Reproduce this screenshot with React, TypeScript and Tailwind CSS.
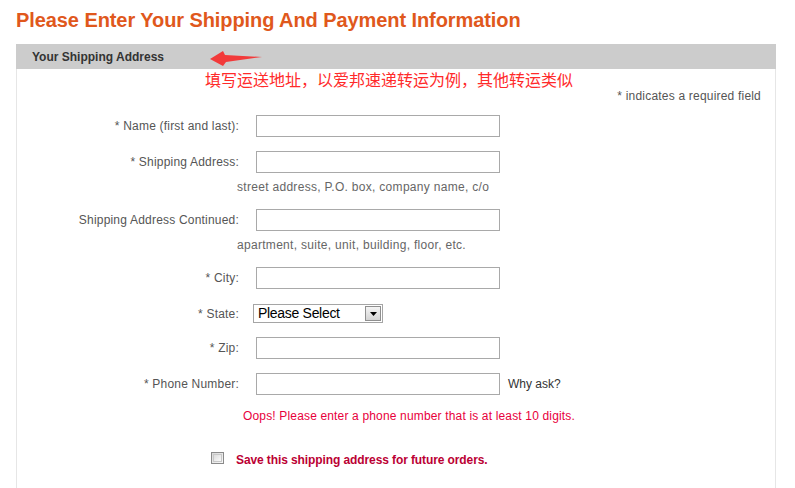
import React from "react";

const Label = ({ children }: { children: React.ReactNode }) => (
  <div className="w-[222px] shrink-0 text-right text-[12px] leading-[14px] tracking-[0.2px] text-[#555555]">{children}</div>
);

const Input = () => (
  <div className="h-[22px] w-[244px] shrink-0 border border-[#a9a9a9] bg-white" />
);

export default function App() {
  return (
    <div
      className="relative h-[488px] w-[795px] overflow-hidden bg-white"
      style={{ fontFamily: '"Liberation Sans", Arial, sans-serif' }}
    >
      <div className="pl-[16px] pt-[8px] text-[20px] font-bold leading-[24px] tracking-[-0.08px] text-[#e0581c]">
        Please Enter Your Shipping And Payment Information
      </div>

      <div className="ml-[16px] mt-[12px] w-[760px]">
        <div className="relative flex h-[25px] items-center bg-[#cccccc] pl-[16px]">
          <span className="text-[12px] font-bold text-[#333333]">Your Shipping Address</span>
          <svg
            className="absolute left-[189px] top-[4px]"
            width="60"
            height="20"
            viewBox="0 0 60 20"
          >
            <polygon points="5,11 18,3 20,7 57,9 21,14 18,18" fill="#f23a3a" />
          </svg>
        </div>

        <div className="h-[419px] border-x border-[#e6e6e6]">
          <div
            className="h-[20px] pl-[188px] text-[16px] leading-[20px] text-[#ff2a2a]"
            style={{ fontFamily: '"Noto Sans CJK SC", "Liberation Sans", sans-serif' }}
          >
            填写运送地址，以爱邦速递转运为例，其他转运类似
          </div>
          <div className="pr-[14px] text-right text-[12px] leading-[14px] tracking-[0.2px] text-[#555555]">
            * indicates a required field
          </div>

          <div className="mt-[12px] flex flex-col">
            <div className="flex items-center">
              <Label>* Name (first and last):</Label>
              <div className="ml-[17px]"><Input /></div>
            </div>

            <div className="mt-[14px] flex items-center">
              <Label>* Shipping Address:</Label>
              <div className="ml-[17px]"><Input /></div>
            </div>
            <div className="mt-[7px] pl-[220px] text-[12px] leading-[14px] tracking-[0.3px] text-[#666666]">
              street address, P.O. box, company name, c/o
            </div>

            <div className="mt-[15px] flex items-center">
              <Label>Shipping Address Continued:</Label>
              <div className="ml-[17px]"><Input /></div>
            </div>
            <div className="mt-[7px] pl-[220px] text-[12px] leading-[14px] tracking-[0.3px] text-[#666666]">
              apartment, suite, unit, building, floor, etc.
            </div>

            <div className="mt-[15px] flex items-center">
              <Label>* City:</Label>
              <div className="ml-[17px]"><Input /></div>
            </div>

            <div className="mt-[15px] flex items-center">
              <Label>* State:</Label>
              <div className="ml-[14px] flex h-[19px] w-[130px] items-center border border-[#a5a5a5] bg-white pl-[4px] pr-[1px]">
                <span className="flex-1 text-[14px] leading-[17px] tracking-[-0.3px] text-black">Please Select</span>
                <div className="flex h-[15px] w-[16px] items-center justify-center border border-[#8f8f8f] bg-gradient-to-b from-[#f4f4f4] to-[#d4d4d4]">
                  <svg width="7" height="4" viewBox="0 0 7 4">
                    <polygon points="0,0 7,0 3.5,4" fill="#000" />
                  </svg>
                </div>
              </div>
            </div>

            <div className="mt-[14px] flex items-center">
              <Label>* Zip:</Label>
              <div className="ml-[17px]"><Input /></div>
            </div>

            <div className="mt-[14px] flex items-center">
              <Label>* Phone Number:</Label>
              <div className="ml-[17px]"><Input /></div>
              <span className="ml-[8px] text-[12px] leading-[14px] text-[#333333]">Why ask?</span>
            </div>

            <div className="mt-[14px] pl-[226px] text-[12px] leading-[14px] tracking-[0.16px] text-[#e8003c]">
              Oops! Please enter a phone number that is at least 10 digits.
            </div>

            <div className="mt-[30px] flex items-start pl-[194px]">
              <div className="mt-[-1px] h-[12px] w-[13px] shrink-0 border border-[#8a8a8a] bg-gradient-to-br from-[#d8d8d8] to-[#f8f8f8] p-[1px]">
                <div className="h-full w-full border border-[#c8c8c8] bg-gradient-to-br from-[#dcdcdc] to-[#fafafa]" />
              </div>
              <span className="ml-[12px] text-[12px] font-bold leading-[14px] tracking-[-0.1px] text-[#bb0033]">
                Save this shipping address for future orders.
              </span>
            </div>
          </div>
        </div>
      </div>
    </div>
  );
}
